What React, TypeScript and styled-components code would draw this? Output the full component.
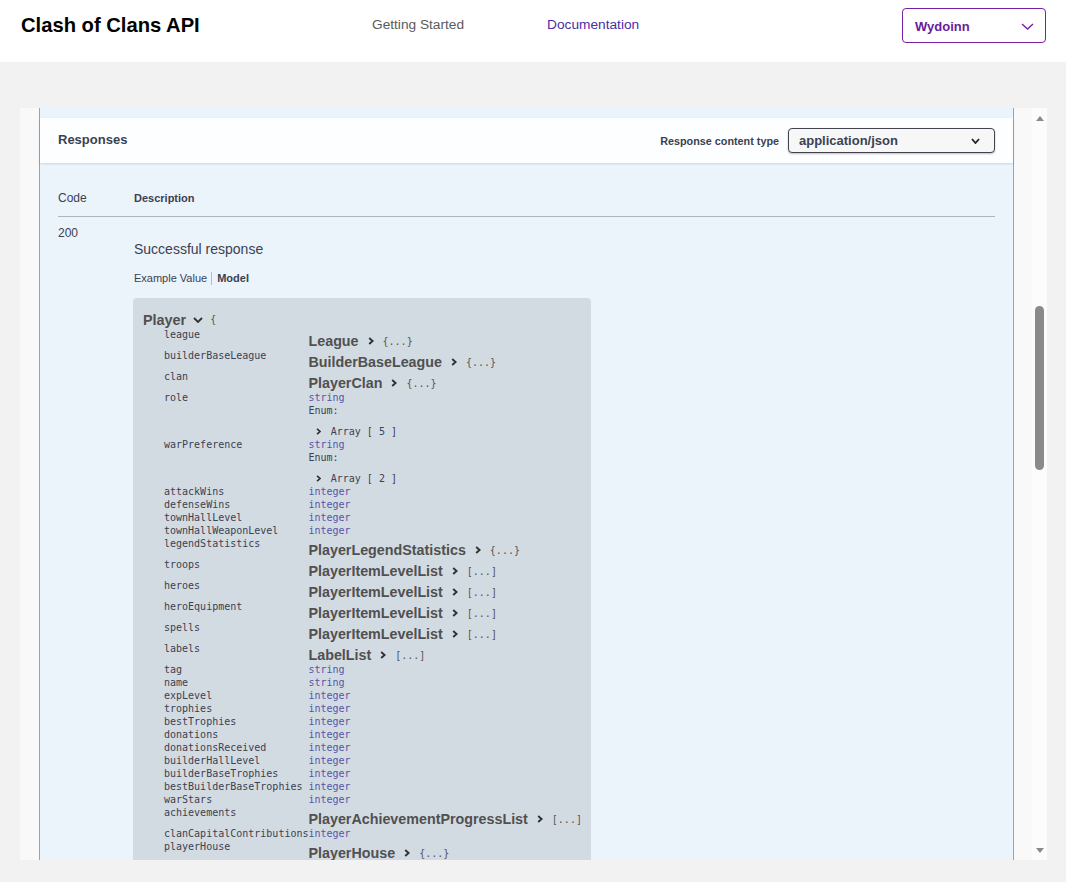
import * as React from "react"
import styled, { createGlobalStyle } from "styled-components"

type Prop =
	| { name: string; kind: "type"; type: string }
	| { name: string; kind: "model"; model: string; brace: string }
	| { name: string; kind: "enum"; type: string; count: number }

const props: Prop[] = [
	{ name: "league", kind: "model", model: "League", brace: "{...}" },
	{ name: "builderBaseLeague", kind: "model", model: "BuilderBaseLeague", brace: "{...}" },
	{ name: "clan", kind: "model", model: "PlayerClan", brace: "{...}" },
	{ name: "role", kind: "enum", type: "string", count: 5 },
	{ name: "warPreference", kind: "enum", type: "string", count: 2 },
	{ name: "attackWins", kind: "type", type: "integer" },
	{ name: "defenseWins", kind: "type", type: "integer" },
	{ name: "townHallLevel", kind: "type", type: "integer" },
	{ name: "townHallWeaponLevel", kind: "type", type: "integer" },
	{ name: "legendStatistics", kind: "model", model: "PlayerLegendStatistics", brace: "{...}" },
	{ name: "troops", kind: "model", model: "PlayerItemLevelList", brace: "[...]" },
	{ name: "heroes", kind: "model", model: "PlayerItemLevelList", brace: "[...]" },
	{ name: "heroEquipment", kind: "model", model: "PlayerItemLevelList", brace: "[...]" },
	{ name: "spells", kind: "model", model: "PlayerItemLevelList", brace: "[...]" },
	{ name: "labels", kind: "model", model: "LabelList", brace: "[...]" },
	{ name: "tag", kind: "type", type: "string" },
	{ name: "name", kind: "type", type: "string" },
	{ name: "expLevel", kind: "type", type: "integer" },
	{ name: "trophies", kind: "type", type: "integer" },
	{ name: "bestTrophies", kind: "type", type: "integer" },
	{ name: "donations", kind: "type", type: "integer" },
	{ name: "donationsReceived", kind: "type", type: "integer" },
	{ name: "builderHallLevel", kind: "type", type: "integer" },
	{ name: "builderBaseTrophies", kind: "type", type: "integer" },
	{ name: "bestBuilderBaseTrophies", kind: "type", type: "integer" },
	{ name: "warStars", kind: "type", type: "integer" },
	{ name: "achievements", kind: "model", model: "PlayerAchievementProgressList", brace: "[...]" },
	{ name: "clanCapitalContributions", kind: "type", type: "integer" },
	{ name: "playerHouse", kind: "model", model: "PlayerHouse", brace: "{...}" },
]

const ChevronRight = ({ size = 8 }: { size?: number }) => (
	<svg width={size * 0.75} height={size} viewBox="0 0 6 8">
		<path d="M1.2 1 L4.6 4 L1.2 7" fill="none" stroke="#303030" strokeWidth="1.9" />
	</svg>
)

const ChevronDown = ({ color, width, height, stroke }: { color: string; width: number; height: number; stroke: number }) => (
	<svg width={width} height={height} viewBox={`0 0 ${width} ${height}`}>
		<path d={`M1 1 L${width / 2} ${height - 1} L${width - 1} 1`} fill="none" stroke={color} strokeWidth={stroke} />
	</svg>
)

export default function App() {
	return (
		<>
			<GlobalStyle />
			<TopBar>
				<Brand>Clash of Clans API</Brand>
				<Nav>
					<NavLink>Getting Started</NavLink>
					<NavLink $active>Documentation</NavLink>
				</Nav>
				<UserSelect>
					<span>Wydoinn</span>
					<ChevronDown color="#7b1fa2" width={13} height={7} stroke={1.4} />
				</UserSelect>
			</TopBar>
			<Main>
				<Panel>
					<Content>
						<OpBlock>
							<SectionHeader>
								<SectionTitle>Responses</SectionTitle>
								<ContentType>
									<ContentLabel>Response content type</ContentLabel>
									<ContentSelect>
										<span>application/json</span>
										<ChevronDown color="#222" width={9} height={6} stroke={1.8} />
									</ContentSelect>
								</ContentType>
							</SectionHeader>
							<ResponsesInner>
								<TableHead>
									<CodeHead>Code</CodeHead>
									<DescHead>Description</DescHead>
								</TableHead>
								<ResponseRow>
									<CodeCell>200</CodeCell>
									<DescCell>
										<DescText>Successful response</DescText>
										<Tabs>
											<Tab>Example Value</Tab>
											<TabDivider />
											<Tab $active>Model</Tab>
										</Tabs>
										<ModelBox>
											<ModelHead>
												<ModelName>Player</ModelName>
												<ChevronDown color="#303030" width={10} height={6} stroke={1.8} />
												<Brace>{"{"}</Brace>
											</ModelHead>
											<PropGrid>
												{props.map((p) => (
													<React.Fragment key={p.name}>
														<PropName>{p.name}</PropName>
														{p.kind === "type" && <TypeText>{p.type}</TypeText>}
														{p.kind === "model" && (
															<ModelRef>
																<ModelTitle>{p.model}</ModelTitle>
																<ChevronRight />
																<Brace>{p.brace}</Brace>
															</ModelRef>
														)}
														{p.kind === "enum" && (
															<EnumBlock>
																<TypeText>{p.type}</TypeText>
																<EnumLabel>Enum:</EnumLabel>
																<ArrayLine>
																	<ChevronRight size={7} />
																	<span>Array [ {p.count} ]</span>
																</ArrayLine>
															</EnumBlock>
														)}
													</React.Fragment>
												))}
											</PropGrid>
										</ModelBox>
									</DescCell>
								</ResponseRow>
							</ResponsesInner>
						</OpBlock>
					</Content>
					<Scrollbar>
						<ArrowButton>
							<ArrowUp />
						</ArrowButton>
						<Track>
							<Thumb />
						</Track>
						<ArrowButton>
							<ArrowDown />
						</ArrowButton>
					</Scrollbar>
				</Panel>
			</Main>
		</>
	)
}

const GlobalStyle = createGlobalStyle`
	body {
		margin: 0;
		background: #f2f2f2;
		font-family: "Liberation Sans", Arial, sans-serif;
	}
`

const TopBar = styled.header`
	display: flex;
	align-items: flex-start;
	height: 62px;
	box-sizing: border-box;
	padding: 8px 20px 0 21px;
	background: #fff;
`

const Brand = styled.div`
	width: 351px;
	font-size: 20.2px;
	font-weight: 700;
	line-height: 35px;
	color: #000;
`

const Nav = styled.nav`
	display: flex;
	gap: 83px;
`

const NavLink = styled.a<{ $active?: boolean }>`
	font-size: 13.7px;
	line-height: 33px;
	color: ${(p) => (p.$active ? "#4b2ea6" : "#5a5a5a")};
	cursor: pointer;
`

const UserSelect = styled.div`
	margin-left: auto;
	display: flex;
	align-items: center;
	justify-content: space-between;
	box-sizing: border-box;
	width: 144px;
	height: 35px;
	padding: 2px 11px 0 12px;
	border: 1px solid #7b1fa2;
	border-radius: 4px;
	font-size: 13px;
	font-weight: 700;
	color: #6a1b9a;
`

const Main = styled.main`
	padding: 46px 19px 0 20px;
`

const Panel = styled.div`
	display: flex;
	height: 752px;
	background: #f9f9f9;
	overflow: hidden;
`

const Content = styled.div`
	flex: 1;
	padding: 0 18px 0 19px;
	overflow: hidden;
`

const OpBlock = styled.div`
	padding-top: 10px;
	border-left: 1px solid #61affe;
	border-right: 1px solid #61affe;
	background: #ebf3fb;
	color: #3b4151;
`

const SectionHeader = styled.div`
	display: flex;
	align-items: center;
	justify-content: space-between;
	height: 45px;
	padding: 0 18px;
	background: #fdfeff;
	box-shadow: 0 1px 2px rgba(0, 0, 0, 0.12);
`

const SectionTitle = styled.h4`
	margin: 0 0 2px;
	font-size: 13px;
	font-weight: 700;
`

const ContentType = styled.div`
	display: flex;
	align-items: center;
	gap: 9px;
`

const ContentLabel = styled.span`
	font-size: 10.8px;
	font-weight: 700;
`

const ContentSelect = styled.div`
	display: flex;
	align-items: center;
	justify-content: space-between;
	box-sizing: border-box;
	width: 207px;
	height: 25px;
	padding: 0 14px 0 10px;
	border: 1px solid #41444e;
	border-radius: 4px;
	background: #f7f7f7;
	box-shadow: 0 1px 2px rgba(0, 0, 0, 0.25);
	font-size: 13px;
	font-weight: 700;
`

const ResponsesInner = styled.div`
	padding: 20px 18px 0;
`

const TableHead = styled.div`
	display: flex;
	align-items: baseline;
	padding: 8px 0 11px;
	border-bottom: 1px solid rgba(59, 65, 81, 0.35);
`

const CodeHead = styled.div`
	width: 76px;
	font-size: 12px;
	line-height: 14px;
`

const DescHead = styled.div`
	font-size: 11px;
	font-weight: 700;
`

const ResponseRow = styled.div`
	display: flex;
	padding-top: 9px;
`

const CodeCell = styled.div`
	width: 76px;
	flex: none;
	font-size: 12px;
	line-height: 14px;
`

const DescCell = styled.div`
	display: flex;
	flex-direction: column;
	align-items: flex-start;
`

const DescText = styled.p`
	margin: 15px 0 0;
	font-size: 14px;
	line-height: 17px;
`

const Tabs = styled.div`
	display: flex;
	align-items: center;
	margin-top: 13px;
`

const Tab = styled.span<{ $active?: boolean }>`
	font-size: 11px;
	line-height: 14px;
	font-weight: ${(p) => (p.$active ? 700 : 400)};
`

const TabDivider = styled.span`
	width: 1px;
	height: 13px;
	margin: 0 5px 0 4px;
	background: rgba(59, 65, 81, 0.3);
`

const ModelBox = styled.div`
	margin: 13px 0 0 -1px;
	padding: 14px 9px 40px 10px;
	border-radius: 4px;
	background: #d3dbe2;
`

const ModelHead = styled.div`
	display: flex;
	align-items: center;
	gap: 7px;
	line-height: 16px;
`

const ModelName = styled.span`
	font-size: 14.4px;
	font-weight: 700;
	color: #505050;
`

const Brace = styled.span`
	font-family: "DejaVu Sans Mono", monospace;
	font-size: 10px;
	color: #555;
`

const PropGrid = styled.div`
	display: grid;
	grid-template-columns: max-content auto;
	align-items: start;
	margin-left: 21px;
	font-family: "DejaVu Sans Mono", monospace;
	font-size: 10px;
	line-height: 13px;
`

const PropName = styled.div`
	color: #3b4151;
	white-space: nowrap;
`

const TypeText = styled.div`
	color: #55a;
`

const ModelRef = styled.div`
	display: flex;
	align-items: center;
	gap: 9px;
	padding-top: 5px;
	height: 16px;
	white-space: nowrap;
`

const ModelTitle = styled.span`
	font-family: "Liberation Sans", Arial, sans-serif;
	font-size: 14.3px;
	font-weight: 700;
	color: #505050;
`

const EnumBlock = styled.div`
	display: flex;
	flex-direction: column;
`

const EnumLabel = styled.div`
	color: #3b4151;
`

const ArrayLine = styled.div`
	display: flex;
	align-items: center;
	gap: 10px;
	padding: 8px 0 0 7px;
	color: #3b4151;
`

const Scrollbar = styled.div`
	display: flex;
	flex-direction: column;
	width: 15px;
	flex: none;
	background: #fcfcfc;
`

const ArrowButton = styled.div`
	display: flex;
	align-items: center;
	justify-content: center;
	height: 20px;
`

const ArrowUp = styled.div`
	width: 0;
	height: 0;
	border-left: 4.5px solid transparent;
	border-right: 4.5px solid transparent;
	border-bottom: 5px solid #8a8a8a;
`

const ArrowDown = styled(ArrowUp)`
	border-bottom: 0;
	border-top: 5px solid #8a8a8a;
`

const Track = styled.div`
	flex: 1;
	padding: 178px 3px 0;
`

const Thumb = styled.div`
	height: 164px;
	border-radius: 5px;
	background: #8a8a8a;
`
